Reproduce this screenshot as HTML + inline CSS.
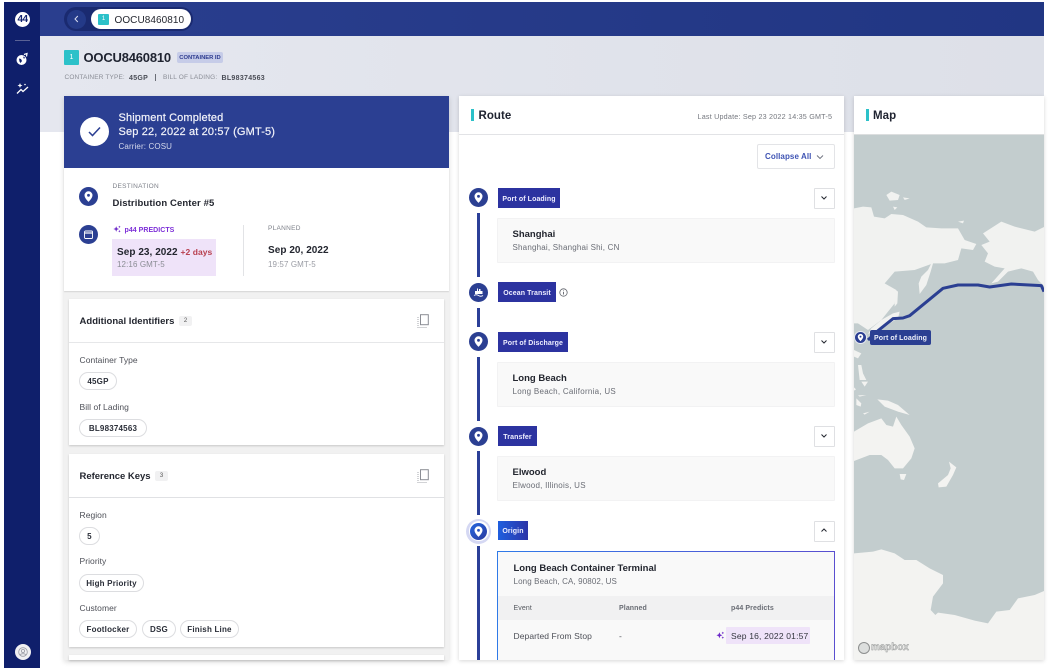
<!DOCTYPE html>
<html><head><meta charset="utf-8">
<style>
html,body{margin:0;padding:0;background:#fff}
#p{position:relative;width:1048px;height:668px;overflow:hidden;background:#fff;font-family:"Liberation Sans",sans-serif;color:#1e2330;filter:blur(.3px)}
#p div,#p svg.a{position:absolute}
.t{position:absolute;white-space:nowrap;line-height:1;transform:translateY(1px)}
.b{font-weight:bold}
.chip{position:absolute;height:16px;border:1px solid #dcdde0;border-radius:9px;background:#fff;box-sizing:content-box;font-size:8px;font-weight:bold;line-height:17px;text-align:center;color:#2a2e38;letter-spacing:.2px}
.card{background:#fff;box-shadow:0 1px 2px rgba(0,0,0,.18)}
.tag{background:#2c33a0;color:#eef;font-size:7px;font-weight:bold;line-height:24px;text-align:center;height:20px;letter-spacing:.1px}
.btn{width:19px;height:19px;border:1px solid #dfe0e3;background:#fff;border-radius:1px}
.box{background:#f9f9f9;border:1px solid #f2f2f3;box-sizing:border-box;border-radius:1px}
.line{left:477px;width:2.5px;background:#2b3f98}
.c{width:19px;height:19px;border-radius:50%;background:#2b3f92}
</style></head><body>
<div id="p">
<svg width="0" height="0" style="position:absolute"><defs>
<symbol id="pin" viewBox="0 0 20 20"><path fill="#fff" fill-rule="evenodd" d="M10 4.500a4.200 4.200 0 0 0-4.200 4.200c0 2.900 3.100 5.800 4.200 7 1.100-1.200 4.200-4.100 4.200-7A4.200 4.200 0 0 0 10 4.500zm0 5.700a1.500 1.500 0 1 1 0-3 1.500 1.500 0 0 1 0 3z"/></symbol>
<symbol id="spark" viewBox="0 0 10 10"><path fill="#6d28c9" d="M4 1.500 5 4l2.500 1L5 6 4 8.500 3 6 .5 5 3 4zM8 .8l.5 1 1 .5-1 .5L8 3.800 7.500 2.800l-1-.5 1-.5zM8 6.300l.5 1 1 .5-1 .5-.5 1-.5-1-1-.5 1-.5z"/></symbol>
<symbol id="copy" viewBox="0 0 12 14"><rect x="3.500" y=".7" width="7.800" height="10" fill="none" stroke="#8b8d94" stroke-width="1"/><path d="M1 3v10.500h9" fill="none" stroke="#a5a7ad" stroke-width="1" stroke-dasharray="1 1"/></symbol>
</defs></svg>

<!-- background band -->
<div style="left:40px;top:36px;width:1004px;height:96px;background:linear-gradient(90deg,#e5e7ef,#dde0e8)"></div>

<!-- top bar -->
<div style="left:40px;top:2px;width:1004px;height:34px;background:linear-gradient(90deg,#2a3e8e,#213683)"></div>
<div style="left:64px;top:7px;width:129px;height:24px;border-radius:12px;background:#1a2a70"></div>
<div style="left:67px;top:9.500px;width:19px;height:19px;border-radius:50%;background:#243a88"></div>
<svg class="a" style="left:72px;top:14px" width="9" height="10" viewBox="0 0 9 10"><path d="M5.800 2 3 5l2.800 3" fill="none" stroke="#d8dcf0" stroke-width="1"/></svg>
<div style="left:91px;top:9px;width:100px;height:20px;border-radius:10px;background:#fff"></div>
<div style="left:98px;top:14px;width:11px;height:11px;background:#2cc1c9;border-radius:1px;color:#fff;font-size:6px;line-height:11px;text-align:center">1</div>
<span class="t" style="left:114.500px;top:15px;font-size:10px;letter-spacing:.06px;color:#23262f">OOCU8460810</span>

<!-- sidebar -->
<div style="left:4px;top:2px;width:36px;height:666px;background:#0f1f6b"></div>
<div style="left:15px;top:12px;width:15px;height:15px;border-radius:50%;background:#fff;color:#12226e;font-size:10px;font-weight:bold;line-height:15px;text-align:center;letter-spacing:-.6px">44</div>
<div style="left:15px;top:40px;width:15px;height:1px;background:#5a6295"></div>
<svg class="a" style="left:15px;top:52px" width="14" height="14" viewBox="0 0 14 14"><circle cx="6.500" cy="8" r="5" fill="#fff"/><path d="M4 6.500l2 .5 1 2-1.500 2-1-1.500zM8 4.500l2 1-1 1.500z" fill="#0f1f6b"/><path d="M9 2.500 12 1.500 11.500 4.500" fill="none" stroke="#fff" stroke-width="1.200"/></svg>
<svg class="a" style="left:16px;top:82px" width="14" height="14" viewBox="0 0 14 14"><path d="M1 11.500 5 7.500l2 2 5-4.500" fill="none" stroke="#fff" stroke-width="1.300"/><path d="M4 1l.7 1.800 1.800.7-1.800.7L4 6l-.7-1.800-1.800-.7 1.800-.7z" fill="#fff"/><circle cx="9" cy="2.500" r=".8" fill="#fff"/></svg>
<div style="left:15px;top:644px;width:16px;height:16px;border-radius:50%;background:#f0f0f2"></div>
<svg class="a" style="left:18px;top:647px" width="10" height="10" viewBox="0 0 10 10"><circle cx="5" cy="5" r="4.300" fill="none" stroke="#9a9ca4" stroke-width=".8"/><circle cx="5" cy="4" r="1.600" fill="none" stroke="#9a9ca4" stroke-width=".8"/><path d="M2.300 7.800c.8-1.500 4.600-1.500 5.400 0" fill="none" stroke="#9a9ca4" stroke-width=".8"/></svg>

<!-- page header -->
<div style="left:64px;top:50px;width:15px;height:15px;background:#2cc1c9;border-radius:1px;color:#fff;font-size:7px;line-height:15px;text-align:center">1</div>
<span class="t b" style="left:83.500px;top:50px;font-size:13px;letter-spacing:-.2px;color:#1f2330">OOCU8460810</span>
<div style="left:177px;top:52px;width:46px;height:11px;background:#c6cce8;border-radius:2px;color:#2c3a8e;font-size:5.800px;font-weight:bold;line-height:12px;text-align:center">CONTAINER ID</div>
<span class="t" style="left:64.500px;top:74px;font-size:6.500px;letter-spacing:.14px;color:#8a8d96">CONTAINER TYPE:</span>
<span class="t b" style="left:129px;top:74px;font-size:7px;letter-spacing:.3px;color:#4a4d56">45GP</span>
<div style="left:155px;top:74px;width:1px;height:7px;background:#6a6d76"></div>
<span class="t" style="left:163px;top:74px;font-size:6.500px;letter-spacing:.17px;color:#8a8d96">BILL OF LADING:</span>
<span class="t b" style="left:221.500px;top:74px;font-size:7px;letter-spacing:.3px;color:#4a4d56">BL98374563</span>

<!-- left panel -->
<div style="left:64px;top:96px;width:385px;height:564px;background:#f1f1f1;box-shadow:0 2px 5px rgba(0,0,0,.14)"></div>
<div style="left:64px;top:96px;width:385px;height:72px;background:#2b3f92"></div>
<div style="left:80px;top:117px;width:29px;height:29px;border-radius:50%;background:#fff"></div>
<svg class="a" style="left:87px;top:124px" width="15" height="15" viewBox="0 0 15 15"><path d="M2 8l3.500 3.500L13 3.500" fill="none" stroke="#2b3f92" stroke-width="1.500"/></svg>
<span class="t" style="left:118.500px;top:111.500px;font-size:11px;letter-spacing:.12px;color:#f2f3fa;-webkit-text-stroke:.2px #f2f3fa">Shipment Completed</span>
<span class="t" style="left:118.500px;top:125.500px;font-size:11px;letter-spacing:.15px;color:#f2f3fa;-webkit-text-stroke:.2px #f2f3fa">Sep 22, 2022 at 20:57 (GMT-5)</span>
<span class="t" style="left:118.500px;top:142px;font-size:8px;letter-spacing:.12px;color:#d5d9ec">Carrier: COSU</span>

<div style="left:64px;top:168px;width:385px;height:123px;background:#fff;box-shadow:0 1px 1px rgba(0,0,0,.12)"></div>
<div class="c" style="left:79px;top:187px"></div>
<svg class="a" style="left:79px;top:187px" width="19" height="19"><use href="#pin"/></svg>
<span class="t" style="left:112.500px;top:183px;font-size:6.500px;letter-spacing:.3px;color:#7d8089">DESTINATION</span>
<span class="t b" style="left:112.500px;top:198px;font-size:9.500px;letter-spacing:.12px;color:#23262f">Distribution Center #5</span>
<div class="c" style="left:79px;top:224.500px"></div>
<svg class="a" style="left:83px;top:228.500px" width="11" height="11" viewBox="0 0 11 11"><rect x="1.500" y="2" width="8" height="7.500" rx="1" fill="none" stroke="#fff" stroke-width=".9"/><path d="M1.500 4h8" stroke="#fff" stroke-width="1.200"/></svg>
<svg class="a" style="left:113px;top:225px" width="8" height="8"><use href="#spark"/></svg>
<span class="t b" style="left:124.500px;top:225.500px;font-size:7px;letter-spacing:.04px;color:#7d2fd8">p44 PREDICTS</span>
<div style="left:112px;top:239px;width:104px;height:37px;background:#efe3f9"></div>
<span class="t b" style="left:117px;top:246.500px;font-size:10px;letter-spacing:.05px;color:#23262f">Sep 23, 2022</span>
<span class="t b" style="left:180.500px;top:247px;font-size:8.500px;letter-spacing:.05px;color:#b8404f">+2 days</span>
<span class="t" style="left:117px;top:260px;font-size:8px;letter-spacing:.1px;color:#8a8c94">12:16 GMT-5</span>
<div style="left:243px;top:225px;width:1px;height:51px;background:#e2e3e6"></div>
<span class="t" style="left:268px;top:225px;font-size:6.500px;letter-spacing:.3px;color:#7d8089">PLANNED</span>
<span class="t b" style="left:268px;top:245px;font-size:10px;letter-spacing:.05px;color:#23262f">Sep 20, 2022</span>
<span class="t" style="left:268px;top:260px;font-size:8px;letter-spacing:.1px;color:#9a9ca4">19:57 GMT-5</span>

<!-- card 1 -->
<div class="card" style="left:69px;top:299px;width:375px;height:146px"></div>
<div style="left:69px;top:342px;width:375px;height:1px;background:#e6e7e9"></div>
<span class="t b" style="left:79.500px;top:316px;font-size:9.500px;letter-spacing:.02px;color:#23262f">Additional Identifiers</span>
<div style="left:179px;top:316px;width:13px;height:10px;background:#f1f1f2;border-radius:2px;color:#555;font-size:6px;line-height:10px;text-align:center">2</div>
<svg class="a" style="left:417px;top:314px" width="12" height="14"><use href="#copy"/></svg>
<span class="t" style="left:79.500px;top:355px;font-size:8.500px;letter-spacing:.05px;color:#4e5058">Container Type</span>
<div class="chip" style="left:79px;top:372px;width:36px">45GP</div>
<span class="t" style="left:79.500px;top:402px;font-size:8.500px;letter-spacing:.05px;color:#4e5058">Bill of Lading</span>
<div class="chip" style="left:79px;top:419px;width:66px">BL98374563</div>

<!-- card 2 -->
<div class="card" style="left:69px;top:454px;width:375px;height:193px"></div>
<div style="left:69px;top:497px;width:375px;height:1px;background:#e0e1e4"></div>
<span class="t b" style="left:79.500px;top:471px;font-size:9.500px;letter-spacing:-.02px;color:#23262f">Reference Keys</span>
<div style="left:155px;top:471px;width:13px;height:10px;background:#f1f1f2;border-radius:2px;color:#555;font-size:6px;line-height:10px;text-align:center">3</div>
<svg class="a" style="left:417px;top:469px" width="12" height="14"><use href="#copy"/></svg>
<span class="t" style="left:79.500px;top:510px;font-size:8.500px;letter-spacing:.05px;color:#4e5058">Region</span>
<div class="chip" style="left:79px;top:527px;width:19px">5</div>
<span class="t" style="left:79.500px;top:556px;font-size:8.500px;letter-spacing:.05px;color:#4e5058">Priority</span>
<div class="chip" style="left:79px;top:574px;width:63px">High Priority</div>
<span class="t" style="left:79.500px;top:603px;font-size:8.500px;letter-spacing:.05px;color:#4e5058">Customer</span>
<div class="chip" style="left:79px;top:620px;width:56px">Footlocker</div>
<div class="chip" style="left:142px;top:620px;width:32px">DSG</div>
<div class="chip" style="left:180px;top:620px;width:57px">Finish Line</div>
<div class="card" style="left:69px;top:655px;width:375px;height:5px"></div>

<!-- route panel -->
<div style="left:459px;top:96px;width:385px;height:564px;background:#fff;box-shadow:0 1px 4px rgba(0,0,0,.16)"></div>
<div style="left:459px;top:134px;width:385px;height:1px;background:#e2e3e6"></div>
<div style="left:471px;top:109px;width:2.500px;height:12px;background:#2cc1c9"></div>
<span class="t b" style="left:478.500px;top:110px;font-size:11.500px;letter-spacing:.05px;color:#1f2330">Route</span>
<span class="t" style="left:697.500px;top:112px;font-size:7.200px;letter-spacing:.2px;color:#75787f">Last Update: Sep 23 2022 14:35 GMT-5</span>
<div style="left:757px;top:144px;width:76px;height:23px;border:1px solid #e3e4e7;border-radius:2px;background:#fff"></div>
<span class="t b" style="left:765px;top:152px;font-size:8px;letter-spacing:.08px;color:#3f54b4">Collapse All</span>
<svg class="a" style="left:816px;top:154px" width="8" height="6" viewBox="0 0 8 6"><path d="M1 1.500 4 4.500l3-3" fill="none" stroke="#6b6f7c" stroke-width=".9"/></svg>

<div class="line" style="top:213px;height:64px"></div>
<div class="line" style="top:308px;height:19px"></div>
<div class="line" style="top:357px;height:64px"></div>
<div class="line" style="top:451px;height:64px"></div>
<div class="line" style="top:546px;height:114px"></div>

<div class="c" style="left:469px;top:188px"></div>
<svg class="a" style="left:469px;top:188px" width="19" height="19"><use href="#pin"/></svg>
<div class="tag" style="left:498px;top:188px;width:62px">Port of Loading</div>
<div class="btn" style="left:814px;top:188px"></div>
<svg class="a" style="left:820px;top:195px" width="8" height="6" viewBox="0 0 8 6"><path d="M1.500 1.500 4 4l2.500-2.500" fill="none" stroke="#23262f" stroke-width="1"/></svg>
<div class="box" style="left:497px;top:218px;width:338px;height:45px"></div>
<span class="t b" style="left:512.500px;top:229px;font-size:9.500px;color:#23262f">Shanghai</span>
<span class="t" style="left:512.500px;top:243px;font-size:8px;letter-spacing:.2px;color:#6a6d75">Shanghai, Shanghai Shi, CN</span>

<div class="c" style="left:469px;top:283px"></div>
<svg class="a" style="left:473px;top:286px" width="11" height="12" viewBox="0 0 11 12"><path d="M2 8V5h2V2.500h1V5h1V3h1.500v2H9.500v3z" fill="#fff"/><path d="M1 9.500c1.500-1 3-1 4.500 0s3 1 4.500 0" fill="none" stroke="#fff" stroke-width=".9"/></svg>
<div class="tag" style="left:498px;top:282px;width:58px">Ocean Transit</div>
<svg class="a" style="left:559px;top:288px" width="9" height="9" viewBox="0 0 9 9"><circle cx="4.500" cy="4.500" r="3.700" fill="none" stroke="#5f626a" stroke-width=".8"/><path d="M4.500 4v2.500M4.500 2.500v.8" stroke="#5f626a" stroke-width=".9"/></svg>

<div class="c" style="left:469px;top:332px"></div>
<svg class="a" style="left:469px;top:332px" width="19" height="19"><use href="#pin"/></svg>
<div class="tag" style="left:498px;top:332px;width:70px">Port of Discharge</div>
<div class="btn" style="left:814px;top:332px"></div>
<svg class="a" style="left:820px;top:339px" width="8" height="6" viewBox="0 0 8 6"><path d="M1.500 1.500 4 4l2.500-2.500" fill="none" stroke="#23262f" stroke-width="1"/></svg>
<div class="box" style="left:497px;top:362px;width:338px;height:45px"></div>
<span class="t b" style="left:512.500px;top:373px;font-size:9.500px;color:#23262f">Long Beach</span>
<span class="t" style="left:512.500px;top:387px;font-size:8px;letter-spacing:.27px;color:#6a6d75">Long Beach, California, US</span>

<div class="c" style="left:469px;top:426.500px"></div>
<svg class="a" style="left:469px;top:426.500px" width="19" height="19"><use href="#pin"/></svg>
<div class="tag" style="left:498px;top:426px;width:39px">Transfer</div>
<div class="btn" style="left:814px;top:426px"></div>
<svg class="a" style="left:820px;top:433px" width="8" height="6" viewBox="0 0 8 6"><path d="M1.500 1.500 4 4l2.500-2.500" fill="none" stroke="#23262f" stroke-width="1"/></svg>
<div class="box" style="left:497px;top:456px;width:338px;height:45px"></div>
<span class="t b" style="left:512.500px;top:467px;font-size:9.500px;color:#23262f">Elwood</span>
<span class="t" style="left:512.500px;top:481px;font-size:8px;letter-spacing:.24px;color:#6a6d75">Elwood, Illinois, US</span>

<div style="left:466px;top:518.500px;width:25px;height:25px;border-radius:50%;background:#d5d8f3"></div>
<div style="left:468.500px;top:521px;width:20px;height:20px;border-radius:50%;background:#fff"></div>
<div style="left:470px;top:522.500px;width:17px;height:17px;border-radius:50%;background:linear-gradient(135deg,#2466e0,#2b3a9e)"></div>
<svg class="a" style="left:469px;top:521.500px" width="19" height="19"><use href="#pin"/></svg>
<div class="tag" style="left:498px;top:521px;width:30px;height:19px;line-height:21px;background:linear-gradient(90deg,#1f5fdf,#2d35a8)">Origin</div>
<div class="btn" style="left:814px;top:521px"></div>
<svg class="a" style="left:820px;top:527px" width="8" height="6" viewBox="0 0 8 6"><path d="M1.500 4.500 4 2l2.500 2.500" fill="none" stroke="#23262f" stroke-width="1"/></svg>

<div style="left:497px;top:550.500px;width:338px;height:109.500px;box-sizing:border-box;background:linear-gradient(#f9f9f9,#f9f9f9) padding-box,linear-gradient(90deg,#2f7ae8,#5a4fd0) border-box;border:1px solid transparent;border-bottom:0"></div>
<span class="t b" style="left:513.500px;top:562.500px;font-size:9.500px;letter-spacing:0;color:#23262f">Long Beach Container Terminal</span>
<span class="t" style="left:513.500px;top:577px;font-size:8px;letter-spacing:.12px;color:#6a6d75">Long Beach, CA, 90802, US</span>
<div style="left:498px;top:596px;width:336px;height:24px;background:#f1f1f2"></div>
<span class="t" style="left:513.500px;top:604px;font-size:7px;letter-spacing:.1px;color:#55585f">Event</span>
<span class="t b" style="left:619px;top:604px;font-size:7px;letter-spacing:.1px;color:#6a6d75">Planned</span>
<span class="t b" style="left:731px;top:604px;font-size:7px;letter-spacing:.1px;color:#6a6d75">p44 Predicts</span>
<span class="t" style="left:513.500px;top:631px;font-size:8.500px;letter-spacing:.08px;color:#4e5058">Departed From Stop</span>
<span class="t" style="left:619px;top:631px;font-size:8.500px;color:#4e5058">-</span>
<svg class="a" style="left:715.500px;top:631px" width="8.500" height="8.500"><use href="#spark"/></svg>
<div style="left:726px;top:627px;width:84px;height:17px;background:#efe3f9;border-radius:1px"></div>
<span class="t" style="left:731px;top:631px;font-size:8.500px;letter-spacing:.18px;color:#33363e">Sep 16, 2022 01:57</span>

<!-- map panel -->
<div style="left:854px;top:96px;width:190px;height:564px;background:#fff;box-shadow:0 1px 4px rgba(0,0,0,.16)"></div>
<div style="left:854px;top:134px;width:190px;height:526px;background:#c3cdce"></div>
<div style="left:854px;top:134px;width:190px;height:1px;background:#dcdedf"></div>
<div style="left:866px;top:109px;width:2.500px;height:12px;background:#2cc1c9"></div>
<span class="t b" style="left:873px;top:110px;font-size:11.500px;letter-spacing:.05px;color:#1f2330">Map</span>

<svg class="a" style="left:854px;top:134px" width="190" height="526" viewBox="0 0 190 526">
<g transform="translate(-6,-44) scale(.33333)" fill="#f1f2f0">
<path d="M18 355 45 350 70 352 78 380 110 385 130 372 165 375 210 395 235 412 280 415 330 415 350 450 385 462 375 480 340 475 330 510 290 520 255 520 200 540 140 545 110 580 145 600 140 640 100 690 60 720 30 700 18 700Z"/>
<path d="M255 510 240 540 220 560 212 580 215 612 235 585 248 545 258 510Z"/>
<path d="M405 430 460 395 500 410 560 425 590 410 590 590 570 570 555 545 520 535 480 545 450 575 430 580 470 535 440 530 410 515 420 490 400 465 425 455Z"/>
<path d="M135 670 155 665 150 685 100 715 60 732 70 715 100 690Z"/>
<path d="M140 598 150 605 148 640 140 650Z"/>
<path d="M115 315 130 305 155 315 150 330 125 332Z"/>
<path d="M165 322 185 325 170 330Z"/><path d="M135 350 148 352 140 360Z"/><path d="M330 395 348 392 345 400Z"/>
<path d="M30 825 40 825 45 850 55 870 35 870Z"/>
<path d="M18 780 40 790 30 805 18 800Z"/>
</g>
<g transform="translate(-6,246) scale(.33333)" fill="#f3f3f1">
<path d="M18 155 60 130 100 115 115 135 135 140 145 110 160 135 185 170 200 205 190 235 165 265 140 265 120 240 100 225 65 225 18 243Z"/>
<path d="M88 58 120 62 150 75 185 105 150 95 110 80Z"/>
<path d="M303 245 325 262 315 285 295 320 272 322 270 310 300 285 308 265Z"/>
<path d="M155 282 175 282 168 300 158 298Z"/>
<path d="M25 55 40 70 38 80 25 75Z"/><path d="M30 46 55 45 35 50Z"/><path d="M45 100 65 95 50 104Z"/><path d="M40 5 60 5 50 20Z"/><path d="M18 22 24 28 18 32Z"/>
<path d="M18 520 75 515 100 508 140 520 170 540 205 540 245 565 285 585 285 610 255 650 248 690 262 705 270 698 320 705 380 722 420 730 445 695 485 690 510 655 560 645 590 632 590 850 18 850Z"/>
</g>
<g transform="translate(-6,-44) scale(.33333)">
<path d="M60 750 90 722 135 686 165 684 185 677 285 595 330 585 390 585 425 591 490 582 580 587 588 605" fill="none" stroke="#2b3f92" stroke-width="9" stroke-linejoin="round"/>
</g>
</svg>
<div style="left:854px;top:331px;width:13px;height:13px;border-radius:50%;background:#2b3f92;border:.5px solid #e8eaf2;box-sizing:border-box"></div>
<svg class="a" style="left:854px;top:331px" width="13" height="13"><use href="#pin"/></svg>
<div style="left:870px;top:330px;width:61px;height:15px;background:#2b3f92;border-radius:2px;color:#eef0fa;font-size:7px;font-weight:bold;line-height:17px;text-align:center;letter-spacing:.08px">Port of Loading</div>
<div style="left:858px;top:642px;width:10px;height:10px;border-radius:50%;background:#dcdedd;border:1.500px solid #8d8f8f;box-sizing:content-box"></div>
<span class="t b" style="left:871px;top:642px;font-size:10px;color:#dcdddc;-webkit-text-stroke:.4px #8d8f8f;letter-spacing:-.1px">mapbox</span>
</div>
</body></html>
